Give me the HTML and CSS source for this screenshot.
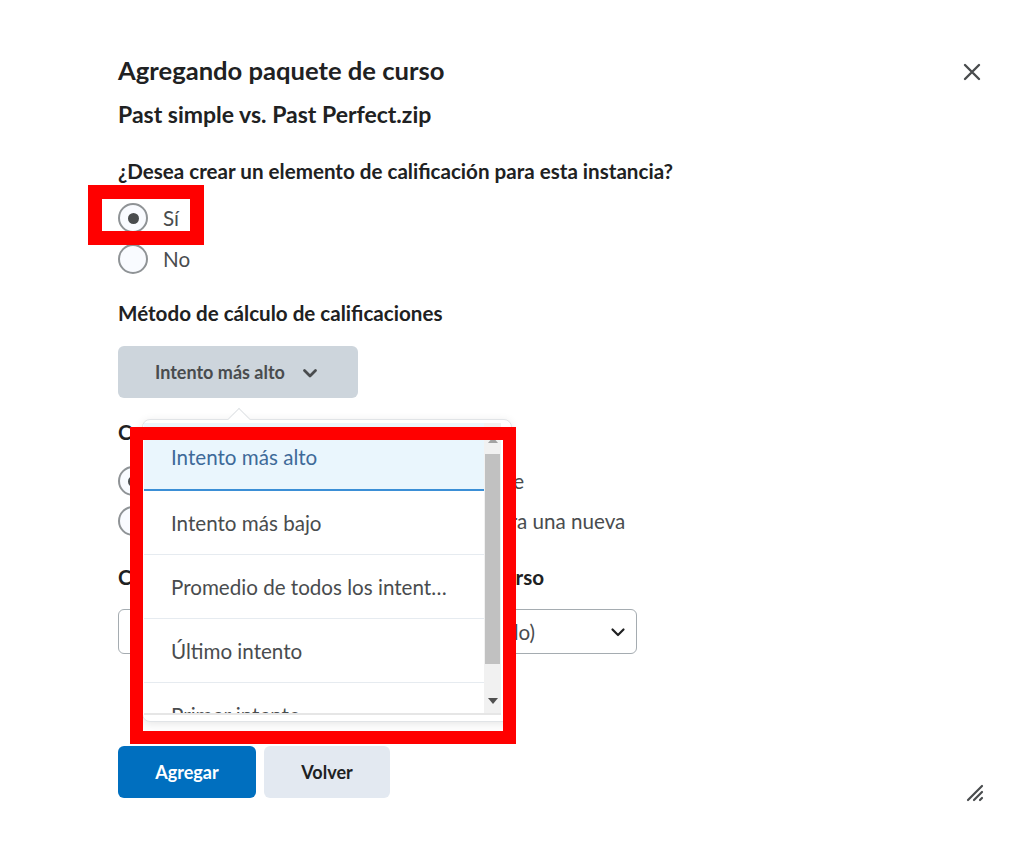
FILE: index.html
```html
<!DOCTYPE html>
<html lang="es">
<head>
<meta charset="utf-8">
<title>Agregando paquete de curso</title>
<link rel="stylesheet" href="styles.css">
</head>
<body>
<div class="dialog">
  <h1 class="title">Agregando paquete de curso</h1>
  <h2 class="subtitle">Past simple vs. Past Perfect.zip</h2>

  <div class="label q1">¿Desea crear un elemento de calificación para esta instancia?</div>
  <div class="radios r1">
    <label class="radio"><span class="circle checked"></span><span class="rtext">Sí</span></label>
    <label class="radio"><span class="circle"></span><span class="rtext">No</span></label>
  </div>

  <div class="label q2">Método de cálculo de calificaciones</div>
  <button class="menu-btn">Intento más alto
    <svg class="chev" width="16" height="16" viewBox="0 0 16 16"><path d="M2.5 5.5l5.5 5.5 5.5-5.5" fill="none" stroke="#494c4e" stroke-width="2.8" stroke-linecap="round" stroke-linejoin="round"/></svg>
  </button>

  <div class="label q3">Comportamiento al cargar una versión</div>
  <div class="radios r2">
    <label class="radio"><span class="circle checked"></span><span class="rtext">Usar elemento de calificación que existe</span></label>
    <label class="radio"><span class="circle"></span><span class="rtext">Crear un elemento de calificaciones para una nueva</span></label>
  </div>

  <div class="label q4">Categoría en el libro de calificaciones del curso</div>
  <div class="select">
    <span class="sel-text">Ninguna categoría (ningún elemento elegido)</span>
    <svg class="sel-chev" width="16" height="16" viewBox="0 0 16 16"><path d="M2.5 5.5l5.5 5.5 5.5-5.5" fill="none" stroke="#202122" stroke-width="2.2" stroke-linecap="round" stroke-linejoin="round"/></svg>
  </div>

  <div class="actions">
    <button class="btn primary">Agregar</button>
    <button class="btn secondary">Volver</button>
  </div>
</div>

<button class="close" aria-label="Cerrar">
  <svg width="18" height="18" viewBox="0 0 18 18"><path d="M2 2l14 14M16 2L2 16" stroke="#494c4e" stroke-width="2.4" stroke-linecap="round"/></svg>
</button>

<div class="grip">
  <svg width="20" height="20" viewBox="0 0 20 20"><path d="M3 18L17 4M9 18l8-8M15 18l2-2" stroke="#494c4e" stroke-width="2.2" stroke-linecap="round"/></svg>
</div>

<div class="popup">
  <div class="arrow"></div>
  <div class="list">
    <div class="items">
      <div class="item active">Intento más alto</div>
      <div class="item">Intento más bajo</div>
      <div class="item">Promedio de todos los intent…</div>
      <div class="item">Último intento</div>
      <div class="item">Primer intento</div>
    </div>
    <div class="scrollbar">
      <div class="sb-up"></div>
      <div class="sb-thumb"></div>
      <div class="sb-down"></div>
    </div>
  </div>
</div>

<div class="hl hl-1"></div>
<div class="hl hl-2"></div>
</body>
</html>
```

FILE: styles.css
```css
* { box-sizing: border-box; }
html, body { margin: 0; padding: 0; background: #fff; }
body {
  position: relative;
  width: 1024px;
  height: 857px;
  overflow: hidden;
  font-family: Lato, "Noto Sans", sans-serif;
  color: #202122;
}
.dialog {
  padding: 55px 0 0 118px;
  display: flex;
  flex-direction: column;
  align-items: flex-start;
}
.title {
  margin: 0;
  font-size: 25.6px;
  line-height: 30px;
  font-weight: 700;
  color: #202122;
}
.subtitle {
  margin: 16px 0 0;
  font-size: 23px;
  line-height: 26px;
  font-weight: 700;
  color: #202122;
}
.label {
  font-size: 20.6px;
  line-height: 24px;
  font-weight: 700;
  color: #202122;
}
.q1 { margin-top: 32px; }
.q2 { margin-top: 27px; }
.q3 { margin-top: 22px; }
.q4 { margin-top: 29px; }
.radios { display: flex; flex-direction: column; }
.r1 { margin-top: 20px; gap: 11px; }
.r2 { margin-top: 22px; gap: 10px; }
.radio {
  display: flex;
  align-items: center;
  height: 30px;
  gap: 15px;
}
.circle {
  width: 30px;
  height: 30px;
  border-radius: 50%;
  border: 2px solid #8f9396;
  background: #f9fbff;
  display: flex;
  align-items: center;
  justify-content: center;
  flex: none;
}
.circle.checked::after {
  content: "";
  width: 11px;
  height: 11px;
  border-radius: 50%;
  background: #494c4e;
}
.rtext {
  font-size: 20.6px;
  color: #494c4e;
  white-space: nowrap;
}
.menu-btn {
  margin-top: 21px;
  width: 240px;
  height: 52px;
  border: none;
  border-radius: 6px;
  background: #cdd5dc;
  font-family: Lato, sans-serif;
  font-size: 18px;
  font-weight: 700;
  color: #494c4e;
  display: flex;
  align-items: center;
  padding: 0 0 0 37px;
  gap: 17px;
}
.chev { margin-top: 1px; }
.select {
  margin-top: 20px;
  width: 519px;
  height: 45px;
  border: 1px solid #a5acb1;
  border-radius: 6px;
  display: flex;
  align-items: center;
  justify-content: space-between;
  padding: 0 10px 0 14px;
}
.sel-text { font-size: 20.6px; color: #494c4e; white-space: nowrap; }
.actions {
  margin-top: 92px;
  display: flex;
  gap: 8px;
}
.btn {
  height: 52px;
  border: none;
  border-radius: 6px;
  font-family: Lato, sans-serif;
  font-size: 18px;
  font-weight: 700;
}
.primary { width: 138px; background: #006fbf; color: #fff; }
.secondary { width: 126px; background: #e3e9f1; color: #202122; }

.close {
  position: absolute;
  left: 963px;
  top: 63px;
  width: 18px;
  height: 18px;
  padding: 0;
  border: none;
  background: none;
  display: flex;
}
.grip {
  position: absolute;
  left: 965px;
  top: 782px;
  width: 20px;
  height: 20px;
  display: flex;
}

.popup {
  position: absolute;
  left: 142px;
  top: 419px;
  width: 370px;
  height: 303px;
  background: #fff;
  border: 1px solid #e1e4e7;
  border-radius: 8px;
  box-shadow: 0 2px 10px rgba(0,0,0,0.10);
  padding: 3px 10px 6px 1px;
}
.arrow {
  position: absolute;
  left: 88px;
  top: -9px;
  width: 16px;
  height: 16px;
  background: #fff;
  border-left: 1px solid #e1e4e7;
  border-top: 1px solid #e1e4e7;
  transform: rotate(45deg);
}
.list {
  position: relative;
  height: 100%;
  display: flex;
  overflow: hidden;
  border-bottom: 2px solid #e6e6e6;
}
.items { flex: 1; overflow: hidden; }
.item {
  height: 64px;
  display: flex;
  align-items: center;
  padding-left: 27px;
  font-size: 20.6px;
  color: #494c4e;
  border-bottom: 1px solid #e6ebf0;
  white-space: nowrap;
}
.item.active {
  height: 68px;
  background: #eaf6fd;
  color: #3e6a99;
  border-bottom: 2px solid #3b8fd6;
  padding-top: 2px;
}
.scrollbar {
  width: 17px;
  background: #f1f1f1;
  position: relative;
  display: flex;
  flex-direction: column;
  align-items: center;
}
.sb-up {
  margin-top: 14px;
  width: 0; height: 0;
  border-left: 5px solid transparent;
  border-right: 5px solid transparent;
  border-bottom: 6px solid #a3a3a3;
}
.sb-thumb {
  margin-top: 11px;
  width: 15px;
  height: 210px;
  background: #c1c1c1;
}
.sb-down {
  margin-top: 34px;
  width: 0; height: 0;
  border-left: 5px solid transparent;
  border-right: 5px solid transparent;
  border-top: 6px solid #505050;
}

.hl {
  position: absolute;
  border: 14px solid #ff0000;
}
.hl-1 { left: 88px; top: 185px; width: 116px; height: 60px; }
.hl-2 { left: 130px; top: 427px; width: 386px; height: 317px; border-width: 13px; }
```
